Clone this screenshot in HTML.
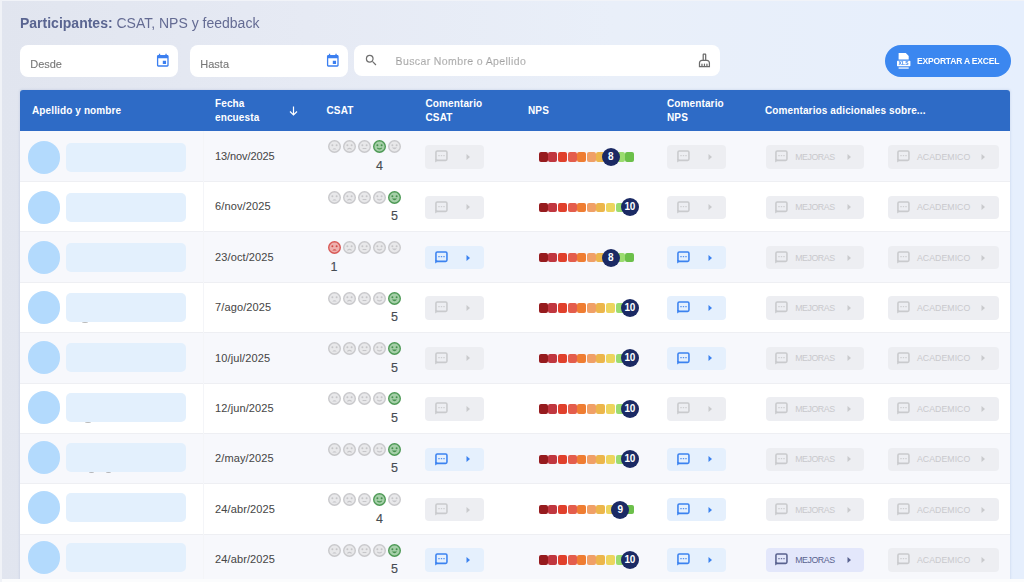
<!DOCTYPE html>
<html><head><meta charset="utf-8"><style>
*{margin:0;padding:0;box-sizing:border-box}
svg{display:block}
html,body{width:1024px;height:582px;overflow:hidden}
body{font-family:"Liberation Sans",sans-serif;background:linear-gradient(90deg,#e1e5ef 0%,#e6eaf4 30%,#e9eff9 60%,#e6effd 100%);position:relative}
.a{position:absolute}
.title{left:20px;top:15.3px;font-size:14px;color:#5a6591;white-space:nowrap}
.inp{position:absolute;background:#fff;border-radius:8px;height:32px;top:44.7px}
.ph{font-size:11px;color:#777;-webkit-text-stroke:0.1px #777;position:absolute;white-space:nowrap}
.hd{position:absolute;color:#fff;font-weight:bold;font-size:10px;line-height:14px;white-space:nowrap;letter-spacing:0.12px}
.band{position:absolute;left:20px;width:990px}
.odd{background:#f7f8fc}
.even{background:#fff}
.avatar{position:absolute;left:27.7px;width:32.6px;height:32.6px;border-radius:50%;background:#b3dafd}
.namebox{position:absolute;z-index:2;left:66px;width:120px;height:29px;border-radius:5px;background:#e3f0fd}
.date{position:absolute;left:215px;font-size:11px;color:#474747;white-space:nowrap;letter-spacing:0.12px;-webkit-text-stroke:0.05px #474747}
.btn{position:absolute;height:23.5px;border-radius:4px}
.btn svg{position:absolute}
.bl{background:#e5f0fd}
.gr{background:#edeef2}
.pu{background:#e3e7fb}
.btxt{position:absolute;font-size:8.8px;white-space:nowrap;letter-spacing:-0.45px}
.sq{position:absolute;width:9px;height:9.5px;border-radius:2px}
.mk{position:absolute;width:18px;height:18px;border-radius:50%;background:#1b2a64;color:#fff;font-weight:bold;font-size:10px;line-height:18px;text-align:center;letter-spacing:-0.4px}
.num{position:absolute;width:20px;text-align:center;font-size:12.5px;line-height:14px;color:#464b52;-webkit-text-stroke:0.15px #464b52}
#wrap{position:absolute;left:0;top:0;width:1024px;height:582px;filter:blur(0.45px)}
</style></head><body><div id="wrap">
<div class="a title"><b>Participantes:</b> <span style="color:#646b93">CSAT, NPS y feedback</span></div>

<div class="inp" style="left:20.2px;width:157.6px"><div class="ph" style="left:10px;top:12.9px">Desde</div><div class="a" style="left:135.15px;top:8.15px"><svg width="15.6" height="15.6" viewBox="0 0 24 24"><path fill="#3b7ff0" d="M17 12h-5v5h5v-5zM16 1v2H8V1H6v2H5c-1.11 0-1.99.9-1.99 2L3 19c0 1.1.89 2 2 2h14c1.1 0 2-.9 2-2V5c0-1.1-.9-2-2-2h-1V1h-2zm3 18H5V8h14v11z"/></svg></div></div>
<div class="inp" style="left:190.3px;width:157.3px"><div class="ph" style="left:10px;top:12.9px">Hasta</div><div class="a" style="left:135.15px;top:8.15px"><svg width="15.6" height="15.6" viewBox="0 0 24 24"><path fill="#3b7ff0" d="M17 12h-5v5h5v-5zM16 1v2H8V1H6v2H5c-1.11 0-1.99.9-1.99 2L3 19c0 1.1.89 2 2 2h14c1.1 0 2-.9 2-2V5c0-1.1-.9-2-2-2h-1V1h-2zm3 18H5V8h14v11z"/></svg></div></div>
<div class="inp" style="left:353.6px;width:366px;top:44.8px;height:31.7px"><div class="a" style="left:10.7px;top:8.4px"><svg width="14.5" height="14.5" viewBox="0 0 24 24"><path fill="#707070" d="M15.5 14h-.79l-.28-.27A6.47 6.47 0 0 0 16 9.5 6.5 6.5 0 1 0 9.5 16c1.61 0 3.09-.59 4.23-1.57l.27.28v.79l5 4.99L20.49 19l-4.99-5zm-6 0C7.01 14 5 11.99 5 9.5S7.01 5 9.5 5 14 7.01 14 9.5 11.99 14 9.5 14z"/></svg></div><div class="ph" style="left:42px;top:10.2px;font-size:10.5px;letter-spacing:0.38px;color:#b8b8b8">Buscar Nombre o Apellido</div><div class="a" style="left:343.9px;top:8.4px"><svg width="14.9" height="14.9" viewBox="0 0 24 24"><path fill="#6b6b6b" d="M16 11h-1V3c0-1.1-.9-2-2-2h-2c-1.1 0-2 .9-2 2v8H8c-2.76 0-5 2.240-5 5v7h18v-7c0-2.76-2.24-5-5-5zm-5-8h2v8h-2V3zm8 18h-2v-3c0-.55-.45-1-1-1s-1 .45-1 1v3h-2v-3c0-.55-.45-1-1-1s-1 .45-1 1v3H9v-3c0-.55-.45-1-1-1s-1 .45-1 1v3H5v-5c0-1.65 1.35-3 3-3h8c1.65 0 3 1.35 3 3v5z"/></svg></div></div>
<div class="a" style="left:884.8px;top:44.6px;width:126px;height:32px;border-radius:16px;background:#3b87f0"><div class="a" style="left:12.6px;top:8.4px"><svg width="14" height="16" viewBox="0 0 14 16"><path d="M1.6 0 H8.8 L11.7 2.9 V6.4 H1.6 Z" fill="#fff"/><rect x="0" y="7.8" width="13.4" height="5.4" rx="0.6" fill="#fff"/><text x="6.7" y="12.4" font-size="5" font-weight="bold" text-anchor="middle" fill="#3b87f0" font-family="Liberation Sans" letter-spacing="0.3">XLS</text><rect x="1.6" y="14.2" width="10.1" height="1.7" fill="#fff" opacity="0.75"/></svg></div><div class="a" style="left:32.2px;top:11.3px;color:#fff;font-weight:bold;font-size:9.3px;letter-spacing:-0.2px;white-space:nowrap;transform:scaleX(0.915);transform-origin:0 0">EXPORTAR A EXCEL</div></div>
<div class="a" style="left:20px;top:89.5px;width:990px;height:489.5px;border-radius:3px 3px 0 0;box-shadow:0 0 2px 0.5px rgba(70,100,170,0.10)"></div>
<div class="a" style="left:20px;top:89.5px;width:990px;height:41.7px;background:#2e6bc6;border-radius:3px 3px 0 0"></div>
<div class="hd" style="left:32px;top:103.5px">Apellido y nombre</div>
<div class="hd" style="left:215px;top:96.7px">Fecha<br>encuesta</div>
<div class="a" style="left:289px;top:105.8px"><svg width="9" height="10" viewBox="0 0 9 10"><path d="M4.5 0.5 V9 M1 5.5 L4.5 9 L8 5.5" stroke="#fff" stroke-width="1.2" fill="none"/></svg></div>
<div class="hd" style="left:326.5px;top:103.5px">CSAT</div>
<div class="hd" style="left:425.5px;top:96.7px">Comentario<br>CSAT</div>
<div class="hd" style="left:528px;top:103.5px">NPS</div>
<div class="hd" style="left:667px;top:96.7px">Comentario<br>NPS</div>
<div class="hd" style="left:765px;top:103.5px">Comentarios adicionales sobre...</div>
<div class="band odd" style="top:131.20px;height:50.80px;border-bottom:1px solid #eeeff3"></div>
<div class="band even" style="top:182.00px;height:50.40px;border-bottom:1px solid #eeeff3"></div>
<div class="band odd" style="top:232.40px;height:50.40px;border-bottom:1px solid #eeeff3"></div>
<div class="band even" style="top:282.80px;height:50.40px;border-bottom:1px solid #eeeff3"></div>
<div class="band odd" style="top:333.20px;height:50.40px;border-bottom:1px solid #eeeff3"></div>
<div class="band even" style="top:383.60px;height:50.40px;border-bottom:1px solid #eeeff3"></div>
<div class="band odd" style="top:434.00px;height:50.40px;border-bottom:1px solid #eeeff3"></div>
<div class="band even" style="top:484.40px;height:50.40px;border-bottom:1px solid #eeeff3"></div>
<div class="band odd" style="top:534.80px;height:50.40px;border-bottom:1px solid #eeeff3"></div>
<div class="a" style="left:202.5px;top:131.2px;width:1.2px;height:448px;background:#f4f5f8"></div>
<div class="avatar" style="top:140.90px;height:33px;width:32.8px"></div>
<div class="namebox" style="top:142.90px"></div>
<div class="date" style="top:150.00px;letter-spacing:-0.1px">13/nov/2025</div>
<div class="a" style="left:327.6px;top:140.40px;width:13px;height:13px"><svg width="13" height="13" viewBox="0 0 26 26"><circle cx="13" cy="13" r="11.6" fill="#e8e8ea" stroke="#c9c9cc" stroke-width="2.8"/><circle cx="8.8" cy="10.6" r="2" fill="#c6c6c9"/><circle cx="17.2" cy="10.6" r="2" fill="#c6c6c9"/><path d="M8.6 19.2 Q13 13.6 17.4 19.2 Z" fill="#c6c6c9"/></svg></div>
<div class="a" style="left:342.7px;top:140.40px;width:13px;height:13px"><svg width="13" height="13" viewBox="0 0 26 26"><circle cx="13" cy="13" r="11.6" fill="#e8e8ea" stroke="#c9c9cc" stroke-width="2.8"/><circle cx="8.8" cy="10.6" r="2" fill="#c6c6c9"/><circle cx="17.2" cy="10.6" r="2" fill="#c6c6c9"/><path d="M8.8 18.6 Q13 14.6 17.2 18.6" stroke="#c6c6c9" stroke-width="2.2" fill="none"/></svg></div>
<div class="a" style="left:357.8px;top:140.40px;width:13px;height:13px"><svg width="13" height="13" viewBox="0 0 26 26"><circle cx="13" cy="13" r="11.6" fill="#e8e8ea" stroke="#c9c9cc" stroke-width="2.8"/><circle cx="8.8" cy="10.6" r="2" fill="#c6c6c9"/><circle cx="17.2" cy="10.6" r="2" fill="#c6c6c9"/><path d="M9.2 17 H16.8" stroke="#c6c6c9" stroke-width="2.2" fill="none"/></svg></div>
<div class="a" style="left:372.9px;top:140.40px;width:13px;height:13px"><svg width="13" height="13" viewBox="0 0 26 26"><circle cx="13" cy="13" r="11.6" fill="#a5cfa8" stroke="#4e9a56" stroke-width="2.8"/><circle cx="8.8" cy="10.6" r="2" fill="#46914e"/><circle cx="17.2" cy="10.6" r="2" fill="#46914e"/><path d="M8.6 15.6 Q13 20 17.4 15.6" stroke="#46914e" stroke-width="2.2" fill="none"/></svg></div>
<div class="a" style="left:388.0px;top:140.40px;width:13px;height:13px"><svg width="13" height="13" viewBox="0 0 26 26"><circle cx="13" cy="13" r="11.6" fill="#e8e8ea" stroke="#c9c9cc" stroke-width="2.8"/><circle cx="8.8" cy="10.6" r="2" fill="#c6c6c9"/><circle cx="17.2" cy="10.6" r="2" fill="#c6c6c9"/><path d="M7.8 14.8 H18.2 Q13 22 7.8 14.8Z" fill="#c6c6c9"/></svg></div>
<div class="num" style="left:369.4px;top:159.00px">4</div>
<div class="btn gr" style="left:425.2px;top:145.10px;width:58.5px"><div class="a" style="left:9.4px;top:5px"><svg width="14" height="13" viewBox="0 0 14 13"><rect x="0.95" y="0.95" width="11" height="9.4" rx="1.3" fill="none" stroke="#c9cacd" stroke-width="1.55"/><path d="M0.17 8.8 V12.6 L3.4 10.2 Z" fill="#c9cacd"/><path d="M3.3 5.6 H9.7" stroke="#c9cacd" stroke-width="1.2" stroke-dasharray="1.4 1.1" opacity="0.85"/></svg></div><div class="a" style="left:40px;top:7.8px"><svg width="6" height="8" viewBox="0 0 6 8"><path d="M1.5 1.1 L5 4 L1.5 6.9 Z" fill="#c9cacd"/></svg></div></div>
<div class="sq" style="left:538.80px;top:152.10px;background:#961b1e"></div>
<div class="sq" style="left:548.40px;top:152.10px;background:#c0363f"></div>
<div class="sq" style="left:558.00px;top:152.10px;background:#e0402c"></div>
<div class="sq" style="left:567.60px;top:152.10px;background:#e45d4c"></div>
<div class="sq" style="left:577.20px;top:152.10px;background:#ef7d32"></div>
<div class="sq" style="left:586.80px;top:152.10px;background:#f0a067"></div>
<div class="sq" style="left:596.40px;top:152.10px;background:#ecb64b"></div>
<div class="sq" style="left:606.00px;top:152.10px;background:#ecd55e"></div>
<div class="sq" style="left:615.60px;top:152.10px;background:#9bdc6f"></div>
<div class="sq" style="left:625.20px;top:152.10px;background:#6cc04a"></div>
<div class="mk" style="left:601.50px;top:147.80px">8</div>
<div class="btn gr" style="left:667.2px;top:145.10px;width:58.5px"><div class="a" style="left:9.4px;top:5px"><svg width="14" height="13" viewBox="0 0 14 13"><rect x="0.95" y="0.95" width="11" height="9.4" rx="1.3" fill="none" stroke="#c9cacd" stroke-width="1.55"/><path d="M0.17 8.8 V12.6 L3.4 10.2 Z" fill="#c9cacd"/><path d="M3.3 5.6 H9.7" stroke="#c9cacd" stroke-width="1.2" stroke-dasharray="1.4 1.1" opacity="0.85"/></svg></div><div class="a" style="left:40px;top:7.8px"><svg width="6" height="8" viewBox="0 0 6 8"><path d="M1.5 1.1 L5 4 L1.5 6.9 Z" fill="#c9cacd"/></svg></div></div>
<div class="btn gr" style="left:765.9px;top:145.10px;width:98px"><div class="a" style="left:9.2px;top:5px"><svg width="14" height="13" viewBox="0 0 14 13"><rect x="0.95" y="0.95" width="11" height="9.4" rx="1.3" fill="none" stroke="#c9cacd" stroke-width="1.55"/><path d="M0.17 8.8 V12.6 L3.4 10.2 Z" fill="#c9cacd"/><path d="M3.3 5.6 H9.7" stroke="#c9cacd" stroke-width="1.2" stroke-dasharray="1.4 1.1" opacity="0.85"/></svg></div><div class="btxt" style="left:29.3px;top:6.8px;color:#c9c9cd">MEJORAS</div><div class="a" style="left:80px;top:7.8px"><svg width="6" height="8" viewBox="0 0 6 8"><path d="M1.5 1.1 L5 4 L1.5 6.9 Z" fill="#c9cacd"/></svg></div></div>
<div class="btn gr" style="left:887.5px;top:145.10px;width:111.5px"><div class="a" style="left:9.4px;top:5px"><svg width="14" height="13" viewBox="0 0 14 13"><rect x="0.95" y="0.95" width="11" height="9.4" rx="1.3" fill="none" stroke="#c9cacd" stroke-width="1.55"/><path d="M0.17 8.8 V12.6 L3.4 10.2 Z" fill="#c9cacd"/><path d="M3.3 5.6 H9.7" stroke="#c9cacd" stroke-width="1.2" stroke-dasharray="1.4 1.1" opacity="0.85"/></svg></div><div class="btxt" style="left:29.5px;top:6.8px;color:#c9c9cd;letter-spacing:0px">ACADEMICO</div><div class="a" style="left:92px;top:7.8px"><svg width="6" height="8" viewBox="0 0 6 8"><path d="M1.5 1.1 L5 4 L1.5 6.9 Z" fill="#c9cacd"/></svg></div></div>
<div class="avatar" style="top:190.90px;height:33px;width:32.8px"></div>
<div class="namebox" style="top:192.90px"></div>
<div class="date" style="top:200.40px">6/nov/2025</div>
<div class="a" style="left:327.6px;top:190.80px;width:13px;height:13px"><svg width="13" height="13" viewBox="0 0 26 26"><circle cx="13" cy="13" r="11.6" fill="#e8e8ea" stroke="#c9c9cc" stroke-width="2.8"/><circle cx="8.8" cy="10.6" r="2" fill="#c6c6c9"/><circle cx="17.2" cy="10.6" r="2" fill="#c6c6c9"/><path d="M8.6 19.2 Q13 13.6 17.4 19.2 Z" fill="#c6c6c9"/></svg></div>
<div class="a" style="left:342.7px;top:190.80px;width:13px;height:13px"><svg width="13" height="13" viewBox="0 0 26 26"><circle cx="13" cy="13" r="11.6" fill="#e8e8ea" stroke="#c9c9cc" stroke-width="2.8"/><circle cx="8.8" cy="10.6" r="2" fill="#c6c6c9"/><circle cx="17.2" cy="10.6" r="2" fill="#c6c6c9"/><path d="M8.8 18.6 Q13 14.6 17.2 18.6" stroke="#c6c6c9" stroke-width="2.2" fill="none"/></svg></div>
<div class="a" style="left:357.8px;top:190.80px;width:13px;height:13px"><svg width="13" height="13" viewBox="0 0 26 26"><circle cx="13" cy="13" r="11.6" fill="#e8e8ea" stroke="#c9c9cc" stroke-width="2.8"/><circle cx="8.8" cy="10.6" r="2" fill="#c6c6c9"/><circle cx="17.2" cy="10.6" r="2" fill="#c6c6c9"/><path d="M9.2 17 H16.8" stroke="#c6c6c9" stroke-width="2.2" fill="none"/></svg></div>
<div class="a" style="left:372.9px;top:190.80px;width:13px;height:13px"><svg width="13" height="13" viewBox="0 0 26 26"><circle cx="13" cy="13" r="11.6" fill="#e8e8ea" stroke="#c9c9cc" stroke-width="2.8"/><circle cx="8.8" cy="10.6" r="2" fill="#c6c6c9"/><circle cx="17.2" cy="10.6" r="2" fill="#c6c6c9"/><path d="M8.6 15.6 Q13 20 17.4 15.6" stroke="#c6c6c9" stroke-width="2.2" fill="none"/></svg></div>
<div class="a" style="left:388.0px;top:190.80px;width:13px;height:13px"><svg width="13" height="13" viewBox="0 0 26 26"><circle cx="13" cy="13" r="11.6" fill="#a5cfa8" stroke="#4e9a56" stroke-width="2.8"/><circle cx="8.8" cy="10.6" r="2" fill="#46914e"/><circle cx="17.2" cy="10.6" r="2" fill="#46914e"/><path d="M7.8 14.8 H18.2 Q13 22 7.8 14.8Z" fill="#46914e"/></svg></div>
<div class="num" style="left:384.5px;top:209.40px">5</div>
<div class="btn gr" style="left:425.2px;top:195.50px;width:58.5px"><div class="a" style="left:9.4px;top:5px"><svg width="14" height="13" viewBox="0 0 14 13"><rect x="0.95" y="0.95" width="11" height="9.4" rx="1.3" fill="none" stroke="#c9cacd" stroke-width="1.55"/><path d="M0.17 8.8 V12.6 L3.4 10.2 Z" fill="#c9cacd"/><path d="M3.3 5.6 H9.7" stroke="#c9cacd" stroke-width="1.2" stroke-dasharray="1.4 1.1" opacity="0.85"/></svg></div><div class="a" style="left:40px;top:7.8px"><svg width="6" height="8" viewBox="0 0 6 8"><path d="M1.5 1.1 L5 4 L1.5 6.9 Z" fill="#c9cacd"/></svg></div></div>
<div class="sq" style="left:538.80px;top:202.50px;background:#961b1e"></div>
<div class="sq" style="left:548.40px;top:202.50px;background:#c0363f"></div>
<div class="sq" style="left:558.00px;top:202.50px;background:#e0402c"></div>
<div class="sq" style="left:567.60px;top:202.50px;background:#e45d4c"></div>
<div class="sq" style="left:577.20px;top:202.50px;background:#ef7d32"></div>
<div class="sq" style="left:586.80px;top:202.50px;background:#f0a067"></div>
<div class="sq" style="left:596.40px;top:202.50px;background:#ecb64b"></div>
<div class="sq" style="left:606.00px;top:202.50px;background:#ecd55e"></div>
<div class="sq" style="left:615.60px;top:202.50px;background:#9bdc6f"></div>
<div class="sq" style="left:625.20px;top:202.50px;background:#6cc04a"></div>
<div class="mk" style="left:620.70px;top:198.20px">10</div>
<div class="btn gr" style="left:667.2px;top:195.50px;width:58.5px"><div class="a" style="left:9.4px;top:5px"><svg width="14" height="13" viewBox="0 0 14 13"><rect x="0.95" y="0.95" width="11" height="9.4" rx="1.3" fill="none" stroke="#c9cacd" stroke-width="1.55"/><path d="M0.17 8.8 V12.6 L3.4 10.2 Z" fill="#c9cacd"/><path d="M3.3 5.6 H9.7" stroke="#c9cacd" stroke-width="1.2" stroke-dasharray="1.4 1.1" opacity="0.85"/></svg></div><div class="a" style="left:40px;top:7.8px"><svg width="6" height="8" viewBox="0 0 6 8"><path d="M1.5 1.1 L5 4 L1.5 6.9 Z" fill="#c9cacd"/></svg></div></div>
<div class="btn gr" style="left:765.9px;top:195.50px;width:98px"><div class="a" style="left:9.2px;top:5px"><svg width="14" height="13" viewBox="0 0 14 13"><rect x="0.95" y="0.95" width="11" height="9.4" rx="1.3" fill="none" stroke="#c9cacd" stroke-width="1.55"/><path d="M0.17 8.8 V12.6 L3.4 10.2 Z" fill="#c9cacd"/><path d="M3.3 5.6 H9.7" stroke="#c9cacd" stroke-width="1.2" stroke-dasharray="1.4 1.1" opacity="0.85"/></svg></div><div class="btxt" style="left:29.3px;top:6.8px;color:#c9c9cd">MEJORAS</div><div class="a" style="left:80px;top:7.8px"><svg width="6" height="8" viewBox="0 0 6 8"><path d="M1.5 1.1 L5 4 L1.5 6.9 Z" fill="#c9cacd"/></svg></div></div>
<div class="btn gr" style="left:887.5px;top:195.50px;width:111.5px"><div class="a" style="left:9.4px;top:5px"><svg width="14" height="13" viewBox="0 0 14 13"><rect x="0.95" y="0.95" width="11" height="9.4" rx="1.3" fill="none" stroke="#c9cacd" stroke-width="1.55"/><path d="M0.17 8.8 V12.6 L3.4 10.2 Z" fill="#c9cacd"/><path d="M3.3 5.6 H9.7" stroke="#c9cacd" stroke-width="1.2" stroke-dasharray="1.4 1.1" opacity="0.85"/></svg></div><div class="btxt" style="left:29.5px;top:6.8px;color:#c9c9cd;letter-spacing:0px">ACADEMICO</div><div class="a" style="left:92px;top:7.8px"><svg width="6" height="8" viewBox="0 0 6 8"><path d="M1.5 1.1 L5 4 L1.5 6.9 Z" fill="#c9cacd"/></svg></div></div>
<div class="avatar" style="top:240.90px;height:33px;width:32.8px"></div>
<div class="namebox" style="top:242.90px"></div>
<div class="date" style="top:250.80px">23/oct/2025</div>
<div class="a" style="left:327.6px;top:241.20px;width:13px;height:13px"><svg width="13" height="13" viewBox="0 0 26 26"><circle cx="13" cy="13" r="11.6" fill="#eeb0ae" stroke="#d85a57" stroke-width="2.8"/><circle cx="8.8" cy="10.6" r="2" fill="#d14b48"/><circle cx="17.2" cy="10.6" r="2" fill="#d14b48"/><path d="M8.6 19.2 Q13 13.6 17.4 19.2 Z" fill="#d14b48"/></svg></div>
<div class="a" style="left:342.7px;top:241.20px;width:13px;height:13px"><svg width="13" height="13" viewBox="0 0 26 26"><circle cx="13" cy="13" r="11.6" fill="#e8e8ea" stroke="#c9c9cc" stroke-width="2.8"/><circle cx="8.8" cy="10.6" r="2" fill="#c6c6c9"/><circle cx="17.2" cy="10.6" r="2" fill="#c6c6c9"/><path d="M8.8 18.6 Q13 14.6 17.2 18.6" stroke="#c6c6c9" stroke-width="2.2" fill="none"/></svg></div>
<div class="a" style="left:357.8px;top:241.20px;width:13px;height:13px"><svg width="13" height="13" viewBox="0 0 26 26"><circle cx="13" cy="13" r="11.6" fill="#e8e8ea" stroke="#c9c9cc" stroke-width="2.8"/><circle cx="8.8" cy="10.6" r="2" fill="#c6c6c9"/><circle cx="17.2" cy="10.6" r="2" fill="#c6c6c9"/><path d="M9.2 17 H16.8" stroke="#c6c6c9" stroke-width="2.2" fill="none"/></svg></div>
<div class="a" style="left:372.9px;top:241.20px;width:13px;height:13px"><svg width="13" height="13" viewBox="0 0 26 26"><circle cx="13" cy="13" r="11.6" fill="#e8e8ea" stroke="#c9c9cc" stroke-width="2.8"/><circle cx="8.8" cy="10.6" r="2" fill="#c6c6c9"/><circle cx="17.2" cy="10.6" r="2" fill="#c6c6c9"/><path d="M8.6 15.6 Q13 20 17.4 15.6" stroke="#c6c6c9" stroke-width="2.2" fill="none"/></svg></div>
<div class="a" style="left:388.0px;top:241.20px;width:13px;height:13px"><svg width="13" height="13" viewBox="0 0 26 26"><circle cx="13" cy="13" r="11.6" fill="#e8e8ea" stroke="#c9c9cc" stroke-width="2.8"/><circle cx="8.8" cy="10.6" r="2" fill="#c6c6c9"/><circle cx="17.2" cy="10.6" r="2" fill="#c6c6c9"/><path d="M7.8 14.8 H18.2 Q13 22 7.8 14.8Z" fill="#c6c6c9"/></svg></div>
<div class="num" style="left:324.1px;top:259.80px">1</div>
<div class="btn bl" style="left:425.2px;top:245.90px;width:58.5px"><div class="a" style="left:9.4px;top:5px"><svg width="14" height="13" viewBox="0 0 14 13"><rect x="0.95" y="0.95" width="11" height="9.4" rx="1.3" fill="none" stroke="#3b82f0" stroke-width="1.55"/><path d="M0.17 8.8 V12.6 L3.4 10.2 Z" fill="#3b82f0"/><path d="M3.3 5.6 H9.7" stroke="#3b82f0" stroke-width="1.2" stroke-dasharray="1.4 1.1" opacity="0.85"/></svg></div><div class="a" style="left:40px;top:7.8px"><svg width="6" height="8" viewBox="0 0 6 8"><path d="M1.5 1.1 L5 4 L1.5 6.9 Z" fill="#3b82f0"/></svg></div></div>
<div class="sq" style="left:538.80px;top:252.90px;background:#961b1e"></div>
<div class="sq" style="left:548.40px;top:252.90px;background:#c0363f"></div>
<div class="sq" style="left:558.00px;top:252.90px;background:#e0402c"></div>
<div class="sq" style="left:567.60px;top:252.90px;background:#e45d4c"></div>
<div class="sq" style="left:577.20px;top:252.90px;background:#ef7d32"></div>
<div class="sq" style="left:586.80px;top:252.90px;background:#f0a067"></div>
<div class="sq" style="left:596.40px;top:252.90px;background:#ecb64b"></div>
<div class="sq" style="left:606.00px;top:252.90px;background:#ecd55e"></div>
<div class="sq" style="left:615.60px;top:252.90px;background:#9bdc6f"></div>
<div class="sq" style="left:625.20px;top:252.90px;background:#6cc04a"></div>
<div class="mk" style="left:601.50px;top:248.60px">8</div>
<div class="btn bl" style="left:667.2px;top:245.90px;width:58.5px"><div class="a" style="left:9.4px;top:5px"><svg width="14" height="13" viewBox="0 0 14 13"><rect x="0.95" y="0.95" width="11" height="9.4" rx="1.3" fill="none" stroke="#3b82f0" stroke-width="1.55"/><path d="M0.17 8.8 V12.6 L3.4 10.2 Z" fill="#3b82f0"/><path d="M3.3 5.6 H9.7" stroke="#3b82f0" stroke-width="1.2" stroke-dasharray="1.4 1.1" opacity="0.85"/></svg></div><div class="a" style="left:40px;top:7.8px"><svg width="6" height="8" viewBox="0 0 6 8"><path d="M1.5 1.1 L5 4 L1.5 6.9 Z" fill="#3b82f0"/></svg></div></div>
<div class="btn gr" style="left:765.9px;top:245.90px;width:98px"><div class="a" style="left:9.2px;top:5px"><svg width="14" height="13" viewBox="0 0 14 13"><rect x="0.95" y="0.95" width="11" height="9.4" rx="1.3" fill="none" stroke="#c9cacd" stroke-width="1.55"/><path d="M0.17 8.8 V12.6 L3.4 10.2 Z" fill="#c9cacd"/><path d="M3.3 5.6 H9.7" stroke="#c9cacd" stroke-width="1.2" stroke-dasharray="1.4 1.1" opacity="0.85"/></svg></div><div class="btxt" style="left:29.3px;top:6.8px;color:#c9c9cd">MEJORAS</div><div class="a" style="left:80px;top:7.8px"><svg width="6" height="8" viewBox="0 0 6 8"><path d="M1.5 1.1 L5 4 L1.5 6.9 Z" fill="#c9cacd"/></svg></div></div>
<div class="btn gr" style="left:887.5px;top:245.90px;width:111.5px"><div class="a" style="left:9.4px;top:5px"><svg width="14" height="13" viewBox="0 0 14 13"><rect x="0.95" y="0.95" width="11" height="9.4" rx="1.3" fill="none" stroke="#c9cacd" stroke-width="1.55"/><path d="M0.17 8.8 V12.6 L3.4 10.2 Z" fill="#c9cacd"/><path d="M3.3 5.6 H9.7" stroke="#c9cacd" stroke-width="1.2" stroke-dasharray="1.4 1.1" opacity="0.85"/></svg></div><div class="btxt" style="left:29.5px;top:6.8px;color:#c9c9cd;letter-spacing:0px">ACADEMICO</div><div class="a" style="left:92px;top:7.8px"><svg width="6" height="8" viewBox="0 0 6 8"><path d="M1.5 1.1 L5 4 L1.5 6.9 Z" fill="#c9cacd"/></svg></div></div>
<div class="avatar" style="top:290.90px;height:33px;width:32.8px"></div>
<div class="namebox" style="top:292.90px"></div>
<div class="date" style="top:301.20px">7/ago/2025</div>
<div class="a" style="left:327.6px;top:291.60px;width:13px;height:13px"><svg width="13" height="13" viewBox="0 0 26 26"><circle cx="13" cy="13" r="11.6" fill="#e8e8ea" stroke="#c9c9cc" stroke-width="2.8"/><circle cx="8.8" cy="10.6" r="2" fill="#c6c6c9"/><circle cx="17.2" cy="10.6" r="2" fill="#c6c6c9"/><path d="M8.6 19.2 Q13 13.6 17.4 19.2 Z" fill="#c6c6c9"/></svg></div>
<div class="a" style="left:342.7px;top:291.60px;width:13px;height:13px"><svg width="13" height="13" viewBox="0 0 26 26"><circle cx="13" cy="13" r="11.6" fill="#e8e8ea" stroke="#c9c9cc" stroke-width="2.8"/><circle cx="8.8" cy="10.6" r="2" fill="#c6c6c9"/><circle cx="17.2" cy="10.6" r="2" fill="#c6c6c9"/><path d="M8.8 18.6 Q13 14.6 17.2 18.6" stroke="#c6c6c9" stroke-width="2.2" fill="none"/></svg></div>
<div class="a" style="left:357.8px;top:291.60px;width:13px;height:13px"><svg width="13" height="13" viewBox="0 0 26 26"><circle cx="13" cy="13" r="11.6" fill="#e8e8ea" stroke="#c9c9cc" stroke-width="2.8"/><circle cx="8.8" cy="10.6" r="2" fill="#c6c6c9"/><circle cx="17.2" cy="10.6" r="2" fill="#c6c6c9"/><path d="M9.2 17 H16.8" stroke="#c6c6c9" stroke-width="2.2" fill="none"/></svg></div>
<div class="a" style="left:372.9px;top:291.60px;width:13px;height:13px"><svg width="13" height="13" viewBox="0 0 26 26"><circle cx="13" cy="13" r="11.6" fill="#e8e8ea" stroke="#c9c9cc" stroke-width="2.8"/><circle cx="8.8" cy="10.6" r="2" fill="#c6c6c9"/><circle cx="17.2" cy="10.6" r="2" fill="#c6c6c9"/><path d="M8.6 15.6 Q13 20 17.4 15.6" stroke="#c6c6c9" stroke-width="2.2" fill="none"/></svg></div>
<div class="a" style="left:388.0px;top:291.60px;width:13px;height:13px"><svg width="13" height="13" viewBox="0 0 26 26"><circle cx="13" cy="13" r="11.6" fill="#a5cfa8" stroke="#4e9a56" stroke-width="2.8"/><circle cx="8.8" cy="10.6" r="2" fill="#46914e"/><circle cx="17.2" cy="10.6" r="2" fill="#46914e"/><path d="M7.8 14.8 H18.2 Q13 22 7.8 14.8Z" fill="#46914e"/></svg></div>
<div class="num" style="left:384.5px;top:310.20px">5</div>
<div class="btn gr" style="left:425.2px;top:296.30px;width:58.5px"><div class="a" style="left:9.4px;top:5px"><svg width="14" height="13" viewBox="0 0 14 13"><rect x="0.95" y="0.95" width="11" height="9.4" rx="1.3" fill="none" stroke="#c9cacd" stroke-width="1.55"/><path d="M0.17 8.8 V12.6 L3.4 10.2 Z" fill="#c9cacd"/><path d="M3.3 5.6 H9.7" stroke="#c9cacd" stroke-width="1.2" stroke-dasharray="1.4 1.1" opacity="0.85"/></svg></div><div class="a" style="left:40px;top:7.8px"><svg width="6" height="8" viewBox="0 0 6 8"><path d="M1.5 1.1 L5 4 L1.5 6.9 Z" fill="#c9cacd"/></svg></div></div>
<div class="sq" style="left:538.80px;top:303.30px;background:#961b1e"></div>
<div class="sq" style="left:548.40px;top:303.30px;background:#c0363f"></div>
<div class="sq" style="left:558.00px;top:303.30px;background:#e0402c"></div>
<div class="sq" style="left:567.60px;top:303.30px;background:#e45d4c"></div>
<div class="sq" style="left:577.20px;top:303.30px;background:#ef7d32"></div>
<div class="sq" style="left:586.80px;top:303.30px;background:#f0a067"></div>
<div class="sq" style="left:596.40px;top:303.30px;background:#ecb64b"></div>
<div class="sq" style="left:606.00px;top:303.30px;background:#ecd55e"></div>
<div class="sq" style="left:615.60px;top:303.30px;background:#9bdc6f"></div>
<div class="sq" style="left:625.20px;top:303.30px;background:#6cc04a"></div>
<div class="mk" style="left:620.70px;top:299.00px">10</div>
<div class="btn bl" style="left:667.2px;top:296.30px;width:58.5px"><div class="a" style="left:9.4px;top:5px"><svg width="14" height="13" viewBox="0 0 14 13"><rect x="0.95" y="0.95" width="11" height="9.4" rx="1.3" fill="none" stroke="#3b82f0" stroke-width="1.55"/><path d="M0.17 8.8 V12.6 L3.4 10.2 Z" fill="#3b82f0"/><path d="M3.3 5.6 H9.7" stroke="#3b82f0" stroke-width="1.2" stroke-dasharray="1.4 1.1" opacity="0.85"/></svg></div><div class="a" style="left:40px;top:7.8px"><svg width="6" height="8" viewBox="0 0 6 8"><path d="M1.5 1.1 L5 4 L1.5 6.9 Z" fill="#3b82f0"/></svg></div></div>
<div class="btn gr" style="left:765.9px;top:296.30px;width:98px"><div class="a" style="left:9.2px;top:5px"><svg width="14" height="13" viewBox="0 0 14 13"><rect x="0.95" y="0.95" width="11" height="9.4" rx="1.3" fill="none" stroke="#c9cacd" stroke-width="1.55"/><path d="M0.17 8.8 V12.6 L3.4 10.2 Z" fill="#c9cacd"/><path d="M3.3 5.6 H9.7" stroke="#c9cacd" stroke-width="1.2" stroke-dasharray="1.4 1.1" opacity="0.85"/></svg></div><div class="btxt" style="left:29.3px;top:6.8px;color:#c9c9cd">MEJORAS</div><div class="a" style="left:80px;top:7.8px"><svg width="6" height="8" viewBox="0 0 6 8"><path d="M1.5 1.1 L5 4 L1.5 6.9 Z" fill="#c9cacd"/></svg></div></div>
<div class="btn gr" style="left:887.5px;top:296.30px;width:111.5px"><div class="a" style="left:9.4px;top:5px"><svg width="14" height="13" viewBox="0 0 14 13"><rect x="0.95" y="0.95" width="11" height="9.4" rx="1.3" fill="none" stroke="#c9cacd" stroke-width="1.55"/><path d="M0.17 8.8 V12.6 L3.4 10.2 Z" fill="#c9cacd"/><path d="M3.3 5.6 H9.7" stroke="#c9cacd" stroke-width="1.2" stroke-dasharray="1.4 1.1" opacity="0.85"/></svg></div><div class="btxt" style="left:29.5px;top:6.8px;color:#c9c9cd;letter-spacing:0px">ACADEMICO</div><div class="a" style="left:92px;top:7.8px"><svg width="6" height="8" viewBox="0 0 6 8"><path d="M1.5 1.1 L5 4 L1.5 6.9 Z" fill="#c9cacd"/></svg></div></div>
<div class="avatar" style="top:340.90px;height:33px;width:32.8px"></div>
<div class="namebox" style="top:342.90px"></div>
<div class="date" style="top:351.60px">10/jul/2025</div>
<div class="a" style="left:327.6px;top:342.00px;width:13px;height:13px"><svg width="13" height="13" viewBox="0 0 26 26"><circle cx="13" cy="13" r="11.6" fill="#e8e8ea" stroke="#c9c9cc" stroke-width="2.8"/><circle cx="8.8" cy="10.6" r="2" fill="#c6c6c9"/><circle cx="17.2" cy="10.6" r="2" fill="#c6c6c9"/><path d="M8.6 19.2 Q13 13.6 17.4 19.2 Z" fill="#c6c6c9"/></svg></div>
<div class="a" style="left:342.7px;top:342.00px;width:13px;height:13px"><svg width="13" height="13" viewBox="0 0 26 26"><circle cx="13" cy="13" r="11.6" fill="#e8e8ea" stroke="#c9c9cc" stroke-width="2.8"/><circle cx="8.8" cy="10.6" r="2" fill="#c6c6c9"/><circle cx="17.2" cy="10.6" r="2" fill="#c6c6c9"/><path d="M8.8 18.6 Q13 14.6 17.2 18.6" stroke="#c6c6c9" stroke-width="2.2" fill="none"/></svg></div>
<div class="a" style="left:357.8px;top:342.00px;width:13px;height:13px"><svg width="13" height="13" viewBox="0 0 26 26"><circle cx="13" cy="13" r="11.6" fill="#e8e8ea" stroke="#c9c9cc" stroke-width="2.8"/><circle cx="8.8" cy="10.6" r="2" fill="#c6c6c9"/><circle cx="17.2" cy="10.6" r="2" fill="#c6c6c9"/><path d="M9.2 17 H16.8" stroke="#c6c6c9" stroke-width="2.2" fill="none"/></svg></div>
<div class="a" style="left:372.9px;top:342.00px;width:13px;height:13px"><svg width="13" height="13" viewBox="0 0 26 26"><circle cx="13" cy="13" r="11.6" fill="#e8e8ea" stroke="#c9c9cc" stroke-width="2.8"/><circle cx="8.8" cy="10.6" r="2" fill="#c6c6c9"/><circle cx="17.2" cy="10.6" r="2" fill="#c6c6c9"/><path d="M8.6 15.6 Q13 20 17.4 15.6" stroke="#c6c6c9" stroke-width="2.2" fill="none"/></svg></div>
<div class="a" style="left:388.0px;top:342.00px;width:13px;height:13px"><svg width="13" height="13" viewBox="0 0 26 26"><circle cx="13" cy="13" r="11.6" fill="#a5cfa8" stroke="#4e9a56" stroke-width="2.8"/><circle cx="8.8" cy="10.6" r="2" fill="#46914e"/><circle cx="17.2" cy="10.6" r="2" fill="#46914e"/><path d="M7.8 14.8 H18.2 Q13 22 7.8 14.8Z" fill="#46914e"/></svg></div>
<div class="num" style="left:384.5px;top:360.60px">5</div>
<div class="btn gr" style="left:425.2px;top:346.70px;width:58.5px"><div class="a" style="left:9.4px;top:5px"><svg width="14" height="13" viewBox="0 0 14 13"><rect x="0.95" y="0.95" width="11" height="9.4" rx="1.3" fill="none" stroke="#c9cacd" stroke-width="1.55"/><path d="M0.17 8.8 V12.6 L3.4 10.2 Z" fill="#c9cacd"/><path d="M3.3 5.6 H9.7" stroke="#c9cacd" stroke-width="1.2" stroke-dasharray="1.4 1.1" opacity="0.85"/></svg></div><div class="a" style="left:40px;top:7.8px"><svg width="6" height="8" viewBox="0 0 6 8"><path d="M1.5 1.1 L5 4 L1.5 6.9 Z" fill="#c9cacd"/></svg></div></div>
<div class="sq" style="left:538.80px;top:353.70px;background:#961b1e"></div>
<div class="sq" style="left:548.40px;top:353.70px;background:#c0363f"></div>
<div class="sq" style="left:558.00px;top:353.70px;background:#e0402c"></div>
<div class="sq" style="left:567.60px;top:353.70px;background:#e45d4c"></div>
<div class="sq" style="left:577.20px;top:353.70px;background:#ef7d32"></div>
<div class="sq" style="left:586.80px;top:353.70px;background:#f0a067"></div>
<div class="sq" style="left:596.40px;top:353.70px;background:#ecb64b"></div>
<div class="sq" style="left:606.00px;top:353.70px;background:#ecd55e"></div>
<div class="sq" style="left:615.60px;top:353.70px;background:#9bdc6f"></div>
<div class="sq" style="left:625.20px;top:353.70px;background:#6cc04a"></div>
<div class="mk" style="left:620.70px;top:349.40px">10</div>
<div class="btn bl" style="left:667.2px;top:346.70px;width:58.5px"><div class="a" style="left:9.4px;top:5px"><svg width="14" height="13" viewBox="0 0 14 13"><rect x="0.95" y="0.95" width="11" height="9.4" rx="1.3" fill="none" stroke="#3b82f0" stroke-width="1.55"/><path d="M0.17 8.8 V12.6 L3.4 10.2 Z" fill="#3b82f0"/><path d="M3.3 5.6 H9.7" stroke="#3b82f0" stroke-width="1.2" stroke-dasharray="1.4 1.1" opacity="0.85"/></svg></div><div class="a" style="left:40px;top:7.8px"><svg width="6" height="8" viewBox="0 0 6 8"><path d="M1.5 1.1 L5 4 L1.5 6.9 Z" fill="#3b82f0"/></svg></div></div>
<div class="btn gr" style="left:765.9px;top:346.70px;width:98px"><div class="a" style="left:9.2px;top:5px"><svg width="14" height="13" viewBox="0 0 14 13"><rect x="0.95" y="0.95" width="11" height="9.4" rx="1.3" fill="none" stroke="#c9cacd" stroke-width="1.55"/><path d="M0.17 8.8 V12.6 L3.4 10.2 Z" fill="#c9cacd"/><path d="M3.3 5.6 H9.7" stroke="#c9cacd" stroke-width="1.2" stroke-dasharray="1.4 1.1" opacity="0.85"/></svg></div><div class="btxt" style="left:29.3px;top:6.8px;color:#c9c9cd">MEJORAS</div><div class="a" style="left:80px;top:7.8px"><svg width="6" height="8" viewBox="0 0 6 8"><path d="M1.5 1.1 L5 4 L1.5 6.9 Z" fill="#c9cacd"/></svg></div></div>
<div class="btn gr" style="left:887.5px;top:346.70px;width:111.5px"><div class="a" style="left:9.4px;top:5px"><svg width="14" height="13" viewBox="0 0 14 13"><rect x="0.95" y="0.95" width="11" height="9.4" rx="1.3" fill="none" stroke="#c9cacd" stroke-width="1.55"/><path d="M0.17 8.8 V12.6 L3.4 10.2 Z" fill="#c9cacd"/><path d="M3.3 5.6 H9.7" stroke="#c9cacd" stroke-width="1.2" stroke-dasharray="1.4 1.1" opacity="0.85"/></svg></div><div class="btxt" style="left:29.5px;top:6.8px;color:#c9c9cd;letter-spacing:0px">ACADEMICO</div><div class="a" style="left:92px;top:7.8px"><svg width="6" height="8" viewBox="0 0 6 8"><path d="M1.5 1.1 L5 4 L1.5 6.9 Z" fill="#c9cacd"/></svg></div></div>
<div class="avatar" style="top:390.90px;height:33px;width:32.8px"></div>
<div class="namebox" style="top:392.90px"></div>
<div class="date" style="top:402.00px">12/jun/2025</div>
<div class="a" style="left:327.6px;top:392.40px;width:13px;height:13px"><svg width="13" height="13" viewBox="0 0 26 26"><circle cx="13" cy="13" r="11.6" fill="#e8e8ea" stroke="#c9c9cc" stroke-width="2.8"/><circle cx="8.8" cy="10.6" r="2" fill="#c6c6c9"/><circle cx="17.2" cy="10.6" r="2" fill="#c6c6c9"/><path d="M8.6 19.2 Q13 13.6 17.4 19.2 Z" fill="#c6c6c9"/></svg></div>
<div class="a" style="left:342.7px;top:392.40px;width:13px;height:13px"><svg width="13" height="13" viewBox="0 0 26 26"><circle cx="13" cy="13" r="11.6" fill="#e8e8ea" stroke="#c9c9cc" stroke-width="2.8"/><circle cx="8.8" cy="10.6" r="2" fill="#c6c6c9"/><circle cx="17.2" cy="10.6" r="2" fill="#c6c6c9"/><path d="M8.8 18.6 Q13 14.6 17.2 18.6" stroke="#c6c6c9" stroke-width="2.2" fill="none"/></svg></div>
<div class="a" style="left:357.8px;top:392.40px;width:13px;height:13px"><svg width="13" height="13" viewBox="0 0 26 26"><circle cx="13" cy="13" r="11.6" fill="#e8e8ea" stroke="#c9c9cc" stroke-width="2.8"/><circle cx="8.8" cy="10.6" r="2" fill="#c6c6c9"/><circle cx="17.2" cy="10.6" r="2" fill="#c6c6c9"/><path d="M9.2 17 H16.8" stroke="#c6c6c9" stroke-width="2.2" fill="none"/></svg></div>
<div class="a" style="left:372.9px;top:392.40px;width:13px;height:13px"><svg width="13" height="13" viewBox="0 0 26 26"><circle cx="13" cy="13" r="11.6" fill="#e8e8ea" stroke="#c9c9cc" stroke-width="2.8"/><circle cx="8.8" cy="10.6" r="2" fill="#c6c6c9"/><circle cx="17.2" cy="10.6" r="2" fill="#c6c6c9"/><path d="M8.6 15.6 Q13 20 17.4 15.6" stroke="#c6c6c9" stroke-width="2.2" fill="none"/></svg></div>
<div class="a" style="left:388.0px;top:392.40px;width:13px;height:13px"><svg width="13" height="13" viewBox="0 0 26 26"><circle cx="13" cy="13" r="11.6" fill="#a5cfa8" stroke="#4e9a56" stroke-width="2.8"/><circle cx="8.8" cy="10.6" r="2" fill="#46914e"/><circle cx="17.2" cy="10.6" r="2" fill="#46914e"/><path d="M7.8 14.8 H18.2 Q13 22 7.8 14.8Z" fill="#46914e"/></svg></div>
<div class="num" style="left:384.5px;top:411.00px">5</div>
<div class="btn gr" style="left:425.2px;top:397.10px;width:58.5px"><div class="a" style="left:9.4px;top:5px"><svg width="14" height="13" viewBox="0 0 14 13"><rect x="0.95" y="0.95" width="11" height="9.4" rx="1.3" fill="none" stroke="#c9cacd" stroke-width="1.55"/><path d="M0.17 8.8 V12.6 L3.4 10.2 Z" fill="#c9cacd"/><path d="M3.3 5.6 H9.7" stroke="#c9cacd" stroke-width="1.2" stroke-dasharray="1.4 1.1" opacity="0.85"/></svg></div><div class="a" style="left:40px;top:7.8px"><svg width="6" height="8" viewBox="0 0 6 8"><path d="M1.5 1.1 L5 4 L1.5 6.9 Z" fill="#c9cacd"/></svg></div></div>
<div class="sq" style="left:538.80px;top:404.10px;background:#961b1e"></div>
<div class="sq" style="left:548.40px;top:404.10px;background:#c0363f"></div>
<div class="sq" style="left:558.00px;top:404.10px;background:#e0402c"></div>
<div class="sq" style="left:567.60px;top:404.10px;background:#e45d4c"></div>
<div class="sq" style="left:577.20px;top:404.10px;background:#ef7d32"></div>
<div class="sq" style="left:586.80px;top:404.10px;background:#f0a067"></div>
<div class="sq" style="left:596.40px;top:404.10px;background:#ecb64b"></div>
<div class="sq" style="left:606.00px;top:404.10px;background:#ecd55e"></div>
<div class="sq" style="left:615.60px;top:404.10px;background:#9bdc6f"></div>
<div class="sq" style="left:625.20px;top:404.10px;background:#6cc04a"></div>
<div class="mk" style="left:620.70px;top:399.80px">10</div>
<div class="btn gr" style="left:667.2px;top:397.10px;width:58.5px"><div class="a" style="left:9.4px;top:5px"><svg width="14" height="13" viewBox="0 0 14 13"><rect x="0.95" y="0.95" width="11" height="9.4" rx="1.3" fill="none" stroke="#c9cacd" stroke-width="1.55"/><path d="M0.17 8.8 V12.6 L3.4 10.2 Z" fill="#c9cacd"/><path d="M3.3 5.6 H9.7" stroke="#c9cacd" stroke-width="1.2" stroke-dasharray="1.4 1.1" opacity="0.85"/></svg></div><div class="a" style="left:40px;top:7.8px"><svg width="6" height="8" viewBox="0 0 6 8"><path d="M1.5 1.1 L5 4 L1.5 6.9 Z" fill="#c9cacd"/></svg></div></div>
<div class="btn gr" style="left:765.9px;top:397.10px;width:98px"><div class="a" style="left:9.2px;top:5px"><svg width="14" height="13" viewBox="0 0 14 13"><rect x="0.95" y="0.95" width="11" height="9.4" rx="1.3" fill="none" stroke="#c9cacd" stroke-width="1.55"/><path d="M0.17 8.8 V12.6 L3.4 10.2 Z" fill="#c9cacd"/><path d="M3.3 5.6 H9.7" stroke="#c9cacd" stroke-width="1.2" stroke-dasharray="1.4 1.1" opacity="0.85"/></svg></div><div class="btxt" style="left:29.3px;top:6.8px;color:#c9c9cd">MEJORAS</div><div class="a" style="left:80px;top:7.8px"><svg width="6" height="8" viewBox="0 0 6 8"><path d="M1.5 1.1 L5 4 L1.5 6.9 Z" fill="#c9cacd"/></svg></div></div>
<div class="btn gr" style="left:887.5px;top:397.10px;width:111.5px"><div class="a" style="left:9.4px;top:5px"><svg width="14" height="13" viewBox="0 0 14 13"><rect x="0.95" y="0.95" width="11" height="9.4" rx="1.3" fill="none" stroke="#c9cacd" stroke-width="1.55"/><path d="M0.17 8.8 V12.6 L3.4 10.2 Z" fill="#c9cacd"/><path d="M3.3 5.6 H9.7" stroke="#c9cacd" stroke-width="1.2" stroke-dasharray="1.4 1.1" opacity="0.85"/></svg></div><div class="btxt" style="left:29.5px;top:6.8px;color:#c9c9cd;letter-spacing:0px">ACADEMICO</div><div class="a" style="left:92px;top:7.8px"><svg width="6" height="8" viewBox="0 0 6 8"><path d="M1.5 1.1 L5 4 L1.5 6.9 Z" fill="#c9cacd"/></svg></div></div>
<div class="avatar" style="top:440.90px;height:33px;width:32.8px"></div>
<div class="namebox" style="top:442.90px"></div>
<div class="date" style="top:452.40px">2/may/2025</div>
<div class="a" style="left:327.6px;top:442.80px;width:13px;height:13px"><svg width="13" height="13" viewBox="0 0 26 26"><circle cx="13" cy="13" r="11.6" fill="#e8e8ea" stroke="#c9c9cc" stroke-width="2.8"/><circle cx="8.8" cy="10.6" r="2" fill="#c6c6c9"/><circle cx="17.2" cy="10.6" r="2" fill="#c6c6c9"/><path d="M8.6 19.2 Q13 13.6 17.4 19.2 Z" fill="#c6c6c9"/></svg></div>
<div class="a" style="left:342.7px;top:442.80px;width:13px;height:13px"><svg width="13" height="13" viewBox="0 0 26 26"><circle cx="13" cy="13" r="11.6" fill="#e8e8ea" stroke="#c9c9cc" stroke-width="2.8"/><circle cx="8.8" cy="10.6" r="2" fill="#c6c6c9"/><circle cx="17.2" cy="10.6" r="2" fill="#c6c6c9"/><path d="M8.8 18.6 Q13 14.6 17.2 18.6" stroke="#c6c6c9" stroke-width="2.2" fill="none"/></svg></div>
<div class="a" style="left:357.8px;top:442.80px;width:13px;height:13px"><svg width="13" height="13" viewBox="0 0 26 26"><circle cx="13" cy="13" r="11.6" fill="#e8e8ea" stroke="#c9c9cc" stroke-width="2.8"/><circle cx="8.8" cy="10.6" r="2" fill="#c6c6c9"/><circle cx="17.2" cy="10.6" r="2" fill="#c6c6c9"/><path d="M9.2 17 H16.8" stroke="#c6c6c9" stroke-width="2.2" fill="none"/></svg></div>
<div class="a" style="left:372.9px;top:442.80px;width:13px;height:13px"><svg width="13" height="13" viewBox="0 0 26 26"><circle cx="13" cy="13" r="11.6" fill="#e8e8ea" stroke="#c9c9cc" stroke-width="2.8"/><circle cx="8.8" cy="10.6" r="2" fill="#c6c6c9"/><circle cx="17.2" cy="10.6" r="2" fill="#c6c6c9"/><path d="M8.6 15.6 Q13 20 17.4 15.6" stroke="#c6c6c9" stroke-width="2.2" fill="none"/></svg></div>
<div class="a" style="left:388.0px;top:442.80px;width:13px;height:13px"><svg width="13" height="13" viewBox="0 0 26 26"><circle cx="13" cy="13" r="11.6" fill="#a5cfa8" stroke="#4e9a56" stroke-width="2.8"/><circle cx="8.8" cy="10.6" r="2" fill="#46914e"/><circle cx="17.2" cy="10.6" r="2" fill="#46914e"/><path d="M7.8 14.8 H18.2 Q13 22 7.8 14.8Z" fill="#46914e"/></svg></div>
<div class="num" style="left:384.5px;top:461.40px">5</div>
<div class="btn bl" style="left:425.2px;top:447.50px;width:58.5px"><div class="a" style="left:9.4px;top:5px"><svg width="14" height="13" viewBox="0 0 14 13"><rect x="0.95" y="0.95" width="11" height="9.4" rx="1.3" fill="none" stroke="#3b82f0" stroke-width="1.55"/><path d="M0.17 8.8 V12.6 L3.4 10.2 Z" fill="#3b82f0"/><path d="M3.3 5.6 H9.7" stroke="#3b82f0" stroke-width="1.2" stroke-dasharray="1.4 1.1" opacity="0.85"/></svg></div><div class="a" style="left:40px;top:7.8px"><svg width="6" height="8" viewBox="0 0 6 8"><path d="M1.5 1.1 L5 4 L1.5 6.9 Z" fill="#3b82f0"/></svg></div></div>
<div class="sq" style="left:538.80px;top:454.50px;background:#961b1e"></div>
<div class="sq" style="left:548.40px;top:454.50px;background:#c0363f"></div>
<div class="sq" style="left:558.00px;top:454.50px;background:#e0402c"></div>
<div class="sq" style="left:567.60px;top:454.50px;background:#e45d4c"></div>
<div class="sq" style="left:577.20px;top:454.50px;background:#ef7d32"></div>
<div class="sq" style="left:586.80px;top:454.50px;background:#f0a067"></div>
<div class="sq" style="left:596.40px;top:454.50px;background:#ecb64b"></div>
<div class="sq" style="left:606.00px;top:454.50px;background:#ecd55e"></div>
<div class="sq" style="left:615.60px;top:454.50px;background:#9bdc6f"></div>
<div class="sq" style="left:625.20px;top:454.50px;background:#6cc04a"></div>
<div class="mk" style="left:620.70px;top:450.20px">10</div>
<div class="btn bl" style="left:667.2px;top:447.50px;width:58.5px"><div class="a" style="left:9.4px;top:5px"><svg width="14" height="13" viewBox="0 0 14 13"><rect x="0.95" y="0.95" width="11" height="9.4" rx="1.3" fill="none" stroke="#3b82f0" stroke-width="1.55"/><path d="M0.17 8.8 V12.6 L3.4 10.2 Z" fill="#3b82f0"/><path d="M3.3 5.6 H9.7" stroke="#3b82f0" stroke-width="1.2" stroke-dasharray="1.4 1.1" opacity="0.85"/></svg></div><div class="a" style="left:40px;top:7.8px"><svg width="6" height="8" viewBox="0 0 6 8"><path d="M1.5 1.1 L5 4 L1.5 6.9 Z" fill="#3b82f0"/></svg></div></div>
<div class="btn gr" style="left:765.9px;top:447.50px;width:98px"><div class="a" style="left:9.2px;top:5px"><svg width="14" height="13" viewBox="0 0 14 13"><rect x="0.95" y="0.95" width="11" height="9.4" rx="1.3" fill="none" stroke="#c9cacd" stroke-width="1.55"/><path d="M0.17 8.8 V12.6 L3.4 10.2 Z" fill="#c9cacd"/><path d="M3.3 5.6 H9.7" stroke="#c9cacd" stroke-width="1.2" stroke-dasharray="1.4 1.1" opacity="0.85"/></svg></div><div class="btxt" style="left:29.3px;top:6.8px;color:#c9c9cd">MEJORAS</div><div class="a" style="left:80px;top:7.8px"><svg width="6" height="8" viewBox="0 0 6 8"><path d="M1.5 1.1 L5 4 L1.5 6.9 Z" fill="#c9cacd"/></svg></div></div>
<div class="btn gr" style="left:887.5px;top:447.50px;width:111.5px"><div class="a" style="left:9.4px;top:5px"><svg width="14" height="13" viewBox="0 0 14 13"><rect x="0.95" y="0.95" width="11" height="9.4" rx="1.3" fill="none" stroke="#c9cacd" stroke-width="1.55"/><path d="M0.17 8.8 V12.6 L3.4 10.2 Z" fill="#c9cacd"/><path d="M3.3 5.6 H9.7" stroke="#c9cacd" stroke-width="1.2" stroke-dasharray="1.4 1.1" opacity="0.85"/></svg></div><div class="btxt" style="left:29.5px;top:6.8px;color:#c9c9cd;letter-spacing:0px">ACADEMICO</div><div class="a" style="left:92px;top:7.8px"><svg width="6" height="8" viewBox="0 0 6 8"><path d="M1.5 1.1 L5 4 L1.5 6.9 Z" fill="#c9cacd"/></svg></div></div>
<div class="avatar" style="top:490.90px;height:33px;width:32.8px"></div>
<div class="namebox" style="top:492.90px"></div>
<div class="date" style="top:502.80px">24/abr/2025</div>
<div class="a" style="left:327.6px;top:493.20px;width:13px;height:13px"><svg width="13" height="13" viewBox="0 0 26 26"><circle cx="13" cy="13" r="11.6" fill="#e8e8ea" stroke="#c9c9cc" stroke-width="2.8"/><circle cx="8.8" cy="10.6" r="2" fill="#c6c6c9"/><circle cx="17.2" cy="10.6" r="2" fill="#c6c6c9"/><path d="M8.6 19.2 Q13 13.6 17.4 19.2 Z" fill="#c6c6c9"/></svg></div>
<div class="a" style="left:342.7px;top:493.20px;width:13px;height:13px"><svg width="13" height="13" viewBox="0 0 26 26"><circle cx="13" cy="13" r="11.6" fill="#e8e8ea" stroke="#c9c9cc" stroke-width="2.8"/><circle cx="8.8" cy="10.6" r="2" fill="#c6c6c9"/><circle cx="17.2" cy="10.6" r="2" fill="#c6c6c9"/><path d="M8.8 18.6 Q13 14.6 17.2 18.6" stroke="#c6c6c9" stroke-width="2.2" fill="none"/></svg></div>
<div class="a" style="left:357.8px;top:493.20px;width:13px;height:13px"><svg width="13" height="13" viewBox="0 0 26 26"><circle cx="13" cy="13" r="11.6" fill="#e8e8ea" stroke="#c9c9cc" stroke-width="2.8"/><circle cx="8.8" cy="10.6" r="2" fill="#c6c6c9"/><circle cx="17.2" cy="10.6" r="2" fill="#c6c6c9"/><path d="M9.2 17 H16.8" stroke="#c6c6c9" stroke-width="2.2" fill="none"/></svg></div>
<div class="a" style="left:372.9px;top:493.20px;width:13px;height:13px"><svg width="13" height="13" viewBox="0 0 26 26"><circle cx="13" cy="13" r="11.6" fill="#a5cfa8" stroke="#4e9a56" stroke-width="2.8"/><circle cx="8.8" cy="10.6" r="2" fill="#46914e"/><circle cx="17.2" cy="10.6" r="2" fill="#46914e"/><path d="M8.6 15.6 Q13 20 17.4 15.6" stroke="#46914e" stroke-width="2.2" fill="none"/></svg></div>
<div class="a" style="left:388.0px;top:493.20px;width:13px;height:13px"><svg width="13" height="13" viewBox="0 0 26 26"><circle cx="13" cy="13" r="11.6" fill="#e8e8ea" stroke="#c9c9cc" stroke-width="2.8"/><circle cx="8.8" cy="10.6" r="2" fill="#c6c6c9"/><circle cx="17.2" cy="10.6" r="2" fill="#c6c6c9"/><path d="M7.8 14.8 H18.2 Q13 22 7.8 14.8Z" fill="#c6c6c9"/></svg></div>
<div class="num" style="left:369.4px;top:511.80px">4</div>
<div class="btn gr" style="left:425.2px;top:497.90px;width:58.5px"><div class="a" style="left:9.4px;top:5px"><svg width="14" height="13" viewBox="0 0 14 13"><rect x="0.95" y="0.95" width="11" height="9.4" rx="1.3" fill="none" stroke="#c9cacd" stroke-width="1.55"/><path d="M0.17 8.8 V12.6 L3.4 10.2 Z" fill="#c9cacd"/><path d="M3.3 5.6 H9.7" stroke="#c9cacd" stroke-width="1.2" stroke-dasharray="1.4 1.1" opacity="0.85"/></svg></div><div class="a" style="left:40px;top:7.8px"><svg width="6" height="8" viewBox="0 0 6 8"><path d="M1.5 1.1 L5 4 L1.5 6.9 Z" fill="#c9cacd"/></svg></div></div>
<div class="sq" style="left:538.80px;top:504.90px;background:#961b1e"></div>
<div class="sq" style="left:548.40px;top:504.90px;background:#c0363f"></div>
<div class="sq" style="left:558.00px;top:504.90px;background:#e0402c"></div>
<div class="sq" style="left:567.60px;top:504.90px;background:#e45d4c"></div>
<div class="sq" style="left:577.20px;top:504.90px;background:#ef7d32"></div>
<div class="sq" style="left:586.80px;top:504.90px;background:#f0a067"></div>
<div class="sq" style="left:596.40px;top:504.90px;background:#ecb64b"></div>
<div class="sq" style="left:606.00px;top:504.90px;background:#ecd55e"></div>
<div class="sq" style="left:615.60px;top:504.90px;background:#9bdc6f"></div>
<div class="sq" style="left:625.20px;top:504.90px;background:#6cc04a"></div>
<div class="mk" style="left:611.10px;top:500.60px">9</div>
<div class="btn bl" style="left:667.2px;top:497.90px;width:58.5px"><div class="a" style="left:9.4px;top:5px"><svg width="14" height="13" viewBox="0 0 14 13"><rect x="0.95" y="0.95" width="11" height="9.4" rx="1.3" fill="none" stroke="#3b82f0" stroke-width="1.55"/><path d="M0.17 8.8 V12.6 L3.4 10.2 Z" fill="#3b82f0"/><path d="M3.3 5.6 H9.7" stroke="#3b82f0" stroke-width="1.2" stroke-dasharray="1.4 1.1" opacity="0.85"/></svg></div><div class="a" style="left:40px;top:7.8px"><svg width="6" height="8" viewBox="0 0 6 8"><path d="M1.5 1.1 L5 4 L1.5 6.9 Z" fill="#3b82f0"/></svg></div></div>
<div class="btn gr" style="left:765.9px;top:497.90px;width:98px"><div class="a" style="left:9.2px;top:5px"><svg width="14" height="13" viewBox="0 0 14 13"><rect x="0.95" y="0.95" width="11" height="9.4" rx="1.3" fill="none" stroke="#c9cacd" stroke-width="1.55"/><path d="M0.17 8.8 V12.6 L3.4 10.2 Z" fill="#c9cacd"/><path d="M3.3 5.6 H9.7" stroke="#c9cacd" stroke-width="1.2" stroke-dasharray="1.4 1.1" opacity="0.85"/></svg></div><div class="btxt" style="left:29.3px;top:6.8px;color:#c9c9cd">MEJORAS</div><div class="a" style="left:80px;top:7.8px"><svg width="6" height="8" viewBox="0 0 6 8"><path d="M1.5 1.1 L5 4 L1.5 6.9 Z" fill="#c9cacd"/></svg></div></div>
<div class="btn gr" style="left:887.5px;top:497.90px;width:111.5px"><div class="a" style="left:9.4px;top:5px"><svg width="14" height="13" viewBox="0 0 14 13"><rect x="0.95" y="0.95" width="11" height="9.4" rx="1.3" fill="none" stroke="#c9cacd" stroke-width="1.55"/><path d="M0.17 8.8 V12.6 L3.4 10.2 Z" fill="#c9cacd"/><path d="M3.3 5.6 H9.7" stroke="#c9cacd" stroke-width="1.2" stroke-dasharray="1.4 1.1" opacity="0.85"/></svg></div><div class="btxt" style="left:29.5px;top:6.8px;color:#c9c9cd;letter-spacing:0px">ACADEMICO</div><div class="a" style="left:92px;top:7.8px"><svg width="6" height="8" viewBox="0 0 6 8"><path d="M1.5 1.1 L5 4 L1.5 6.9 Z" fill="#c9cacd"/></svg></div></div>
<div class="avatar" style="top:540.90px;height:33px;width:32.8px"></div>
<div class="namebox" style="top:542.90px"></div>
<div class="date" style="top:553.20px">24/abr/2025</div>
<div class="a" style="left:327.6px;top:543.60px;width:13px;height:13px"><svg width="13" height="13" viewBox="0 0 26 26"><circle cx="13" cy="13" r="11.6" fill="#e8e8ea" stroke="#c9c9cc" stroke-width="2.8"/><circle cx="8.8" cy="10.6" r="2" fill="#c6c6c9"/><circle cx="17.2" cy="10.6" r="2" fill="#c6c6c9"/><path d="M8.6 19.2 Q13 13.6 17.4 19.2 Z" fill="#c6c6c9"/></svg></div>
<div class="a" style="left:342.7px;top:543.60px;width:13px;height:13px"><svg width="13" height="13" viewBox="0 0 26 26"><circle cx="13" cy="13" r="11.6" fill="#e8e8ea" stroke="#c9c9cc" stroke-width="2.8"/><circle cx="8.8" cy="10.6" r="2" fill="#c6c6c9"/><circle cx="17.2" cy="10.6" r="2" fill="#c6c6c9"/><path d="M8.8 18.6 Q13 14.6 17.2 18.6" stroke="#c6c6c9" stroke-width="2.2" fill="none"/></svg></div>
<div class="a" style="left:357.8px;top:543.60px;width:13px;height:13px"><svg width="13" height="13" viewBox="0 0 26 26"><circle cx="13" cy="13" r="11.6" fill="#e8e8ea" stroke="#c9c9cc" stroke-width="2.8"/><circle cx="8.8" cy="10.6" r="2" fill="#c6c6c9"/><circle cx="17.2" cy="10.6" r="2" fill="#c6c6c9"/><path d="M9.2 17 H16.8" stroke="#c6c6c9" stroke-width="2.2" fill="none"/></svg></div>
<div class="a" style="left:372.9px;top:543.60px;width:13px;height:13px"><svg width="13" height="13" viewBox="0 0 26 26"><circle cx="13" cy="13" r="11.6" fill="#e8e8ea" stroke="#c9c9cc" stroke-width="2.8"/><circle cx="8.8" cy="10.6" r="2" fill="#c6c6c9"/><circle cx="17.2" cy="10.6" r="2" fill="#c6c6c9"/><path d="M8.6 15.6 Q13 20 17.4 15.6" stroke="#c6c6c9" stroke-width="2.2" fill="none"/></svg></div>
<div class="a" style="left:388.0px;top:543.60px;width:13px;height:13px"><svg width="13" height="13" viewBox="0 0 26 26"><circle cx="13" cy="13" r="11.6" fill="#a5cfa8" stroke="#4e9a56" stroke-width="2.8"/><circle cx="8.8" cy="10.6" r="2" fill="#46914e"/><circle cx="17.2" cy="10.6" r="2" fill="#46914e"/><path d="M7.8 14.8 H18.2 Q13 22 7.8 14.8Z" fill="#46914e"/></svg></div>
<div class="num" style="left:384.5px;top:562.20px">5</div>
<div class="btn bl" style="left:425.2px;top:548.30px;width:58.5px"><div class="a" style="left:9.4px;top:5px"><svg width="14" height="13" viewBox="0 0 14 13"><rect x="0.95" y="0.95" width="11" height="9.4" rx="1.3" fill="none" stroke="#3b82f0" stroke-width="1.55"/><path d="M0.17 8.8 V12.6 L3.4 10.2 Z" fill="#3b82f0"/><path d="M3.3 5.6 H9.7" stroke="#3b82f0" stroke-width="1.2" stroke-dasharray="1.4 1.1" opacity="0.85"/></svg></div><div class="a" style="left:40px;top:7.8px"><svg width="6" height="8" viewBox="0 0 6 8"><path d="M1.5 1.1 L5 4 L1.5 6.9 Z" fill="#3b82f0"/></svg></div></div>
<div class="sq" style="left:538.80px;top:555.30px;background:#961b1e"></div>
<div class="sq" style="left:548.40px;top:555.30px;background:#c0363f"></div>
<div class="sq" style="left:558.00px;top:555.30px;background:#e0402c"></div>
<div class="sq" style="left:567.60px;top:555.30px;background:#e45d4c"></div>
<div class="sq" style="left:577.20px;top:555.30px;background:#ef7d32"></div>
<div class="sq" style="left:586.80px;top:555.30px;background:#f0a067"></div>
<div class="sq" style="left:596.40px;top:555.30px;background:#ecb64b"></div>
<div class="sq" style="left:606.00px;top:555.30px;background:#ecd55e"></div>
<div class="sq" style="left:615.60px;top:555.30px;background:#9bdc6f"></div>
<div class="sq" style="left:625.20px;top:555.30px;background:#6cc04a"></div>
<div class="mk" style="left:620.70px;top:551.00px">10</div>
<div class="btn bl" style="left:667.2px;top:548.30px;width:58.5px"><div class="a" style="left:9.4px;top:5px"><svg width="14" height="13" viewBox="0 0 14 13"><rect x="0.95" y="0.95" width="11" height="9.4" rx="1.3" fill="none" stroke="#3b82f0" stroke-width="1.55"/><path d="M0.17 8.8 V12.6 L3.4 10.2 Z" fill="#3b82f0"/><path d="M3.3 5.6 H9.7" stroke="#3b82f0" stroke-width="1.2" stroke-dasharray="1.4 1.1" opacity="0.85"/></svg></div><div class="a" style="left:40px;top:7.8px"><svg width="6" height="8" viewBox="0 0 6 8"><path d="M1.5 1.1 L5 4 L1.5 6.9 Z" fill="#3b82f0"/></svg></div></div>
<div class="btn pu" style="left:765.9px;top:548.30px;width:98px"><div class="a" style="left:9.2px;top:5px"><svg width="14" height="13" viewBox="0 0 14 13"><rect x="0.95" y="0.95" width="11" height="9.4" rx="1.3" fill="none" stroke="#59628f" stroke-width="1.55"/><path d="M0.17 8.8 V12.6 L3.4 10.2 Z" fill="#59628f"/><path d="M3.3 5.6 H9.7" stroke="#59628f" stroke-width="1.2" stroke-dasharray="1.4 1.1" opacity="0.85"/></svg></div><div class="btxt" style="left:29.3px;top:6.8px;color:#5a638f">MEJORAS</div><div class="a" style="left:80px;top:7.8px"><svg width="6" height="8" viewBox="0 0 6 8"><path d="M1.5 1.1 L5 4 L1.5 6.9 Z" fill="#59628f"/></svg></div></div>
<div class="btn gr" style="left:887.5px;top:548.30px;width:111.5px"><div class="a" style="left:9.4px;top:5px"><svg width="14" height="13" viewBox="0 0 14 13"><rect x="0.95" y="0.95" width="11" height="9.4" rx="1.3" fill="none" stroke="#c9cacd" stroke-width="1.55"/><path d="M0.17 8.8 V12.6 L3.4 10.2 Z" fill="#c9cacd"/><path d="M3.3 5.6 H9.7" stroke="#c9cacd" stroke-width="1.2" stroke-dasharray="1.4 1.1" opacity="0.85"/></svg></div><div class="btxt" style="left:29.5px;top:6.8px;color:#c9c9cd;letter-spacing:0px">ACADEMICO</div><div class="a" style="left:92px;top:7.8px"><svg width="6" height="8" viewBox="0 0 6 8"><path d="M1.5 1.1 L5 4 L1.5 6.9 Z" fill="#c9cacd"/></svg></div></div>
<div class="a" style="left:81.6px;top:321.1px;width:6px;height:2.4px;border-radius:50%;background:rgba(60,60,60,0.35);filter:blur(0.6px)"></div>
<div class="a" style="left:84.5px;top:421.1px;width:6px;height:2.4px;border-radius:50%;background:rgba(60,60,60,0.35);filter:blur(0.6px)"></div>
<div class="a" style="left:89.0px;top:471.0px;width:5px;height:2.4px;border-radius:50%;background:rgba(60,60,60,0.35);filter:blur(0.6px)"></div>
<div class="a" style="left:106.1px;top:471.0px;width:5px;height:2.4px;border-radius:50%;background:rgba(60,60,60,0.35);filter:blur(0.6px)"></div>
<div class="a" style="left:0;top:579px;width:1024px;height:4px;background:#fbfcfd"></div>
<div class="a" style="left:0;top:0;width:1024px;height:1px;background:#f1f3f8"></div>
<div class="a" style="left:0;top:0;width:2px;height:582px;background:#f0f2f7"></div>
</div></body></html>
